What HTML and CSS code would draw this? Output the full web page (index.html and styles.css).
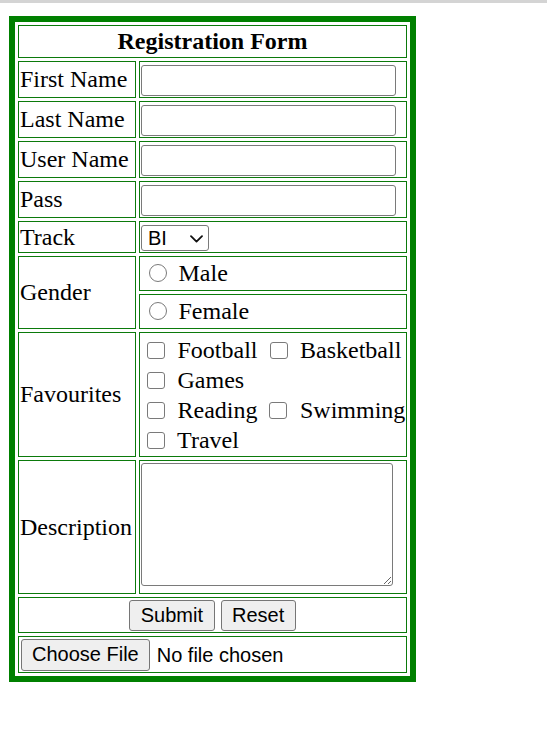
FILE: index.html
```html
<!DOCTYPE html>
<html lang="en">
<head>
<meta charset="utf-8">
<title>Registration Form</title>
<link rel="stylesheet" href="styles.css">
</head>
<body>
<div class="topbar"></div>
<form class="reg-form">
<table class="form-table">
  <colgroup><col class="col-label"><col class="col-field"></colgroup>
  <tr class="row-head"><th colspan="2" class="head">Registration Form</th></tr>
  <tr class="row-input"><td class="label">First Name</td><td class="field field-top"><input type="text" class="text-input"></td></tr>
  <tr class="row-input"><td class="label">Last Name</td><td class="field field-top"><input type="text" class="text-input"></td></tr>
  <tr class="row-input"><td class="label">User Name</td><td class="field field-top"><input type="text" class="text-input"></td></tr>
  <tr class="row-input"><td class="label">Pass</td><td class="field field-top"><input type="password" class="text-input"></td></tr>
  <tr class="row-track"><td class="label">Track</td><td class="field field-top"><span class="select-wrap"><select class="track-select"><option>BI</option><option>OS</option><option>SD</option></select><svg class="chevron" width="13" height="8" viewBox="0 0 13 8" aria-hidden="true"><path d="M1 1.2 L6.5 6.6 L12 1.2" fill="none" stroke="#111" stroke-width="1.8" stroke-linecap="round" stroke-linejoin="round"/></svg></span></td></tr>
  <tr class="row-radio"><td class="label" rowspan="2">Gender</td><td class="field"><input type="radio" name="gender" class="radio"> Male</td></tr>
  <tr class="row-radio"><td class="field"><input type="radio" name="gender" class="radio"> Female</td></tr>
  <tr class="row-fav"><td class="label">Favourites</td><td class="field fav-cell"><input type="checkbox" class="check"> Football <input type="checkbox" class="check"> Basketball<br><input type="checkbox" class="check"> Games<br><input type="checkbox" class="check"> Reading <input type="checkbox" class="check"> Swimming<br><input type="checkbox" class="check"> Travel</td></tr>
  <tr class="row-desc"><td class="label">Description</td><td class="field field-top"><textarea class="desc"></textarea></td></tr>
  <tr class="row-actions"><td colspan="2" class="actions"><input type="submit" value="Submit" class="btn"> <input type="reset" value="Reset" class="btn"></td></tr>
  <tr class="row-file"><td colspan="2" class="file-cell"><input type="file" class="file"></td></tr>
</table>
</form>
</body>
</html>
```
FILE: styles.css
```css
html, body {
  margin: 0;
  padding: 0;
  background: #ffffff;
}
body {
  font-family: "Liberation Serif", "Times New Roman", serif;
  font-size: 24px;
  color: #000;
}
.topbar {
  height: 3px;
  background: #d4d4d4;
}
.reg-form {
  margin: 13px 0 0 9px;
}
.form-table {
  box-sizing: border-box;
  width: 407px;
  table-layout: fixed;
  border: 6px solid #008000;
  border-collapse: separate;
  border-spacing: 3px;
}
.col-label { width: 118px; }
.col-field { width: 268px; }

.form-table th,
.form-table td {
  border: 1px solid #0b7a0b;
  padding: 1px;
  vertical-align: middle;
  white-space: nowrap;
}
.head {
  font-weight: bold;
  text-align: center;
}
.label {
  padding: 1px 2px;
  text-align: left;
}
.field-top {
  vertical-align: top !important;
}

.row-head { height: 33px; }
.row-input { height: 37px; }
.row-track { height: 32px; }
.row-radio { height: 35px; }
.row-fav { height: 125px; }
.row-desc { height: 134px; }
.row-actions { height: 36px; }
.row-file { height: 37px; }

.text-input {
  display: block;
  box-sizing: border-box;
  width: 255px;
  height: 31px;
  margin: 2px 0 0 0;
  padding: 1px 3px;
  border: 1px solid #7a7a7a;
  border-radius: 3px;
  background: #fff;
  font: 20px "Liberation Sans", Arial, sans-serif;
}
.select-wrap {
  position: relative;
  display: block;
  width: 68px;
  margin: 2px 0 0 0;
}
.track-select {
  display: block;
  box-sizing: border-box;
  width: 68px;
  height: 26px;
  margin: 0;
  padding: 0 0 0 6px;
  border: 1px solid #7a7a7a;
  border-radius: 3px;
  background: #fff;
  color: #000;
  font: 20px "Liberation Sans", Arial, sans-serif;
  -webkit-appearance: none;
  appearance: none;
}
.chevron {
  position: absolute;
  right: 6px;
  top: 10px;
  pointer-events: none;
}
.radio {
  -webkit-appearance: none;
  appearance: none;
  box-sizing: border-box;
  width: 18px;
  height: 18px;
  margin: 0 6px 0 7.5px;
  border: 1px solid #7a7a7a;
  border-radius: 50%;
  background: #fff;
  vertical-align: -1px;
}
.fav-cell {
  line-height: 30px;
}
.check {
  -webkit-appearance: none;
  appearance: none;
  box-sizing: border-box;
  width: 18px;
  height: 17px;
  margin: 0 6.5px 0 6px;
  border: 1px solid #7a7a7a;
  border-radius: 3px;
  background: #fff;
  vertical-align: -1px;
}
.desc {
  display: block;
  box-sizing: border-box;
  width: 252px;
  height: 123px;
  margin: 1px 0 0 0;
  border: 1px solid #7a7a7a;
  border-radius: 3px;
  font: 20px "Liberation Sans", Arial, sans-serif;
}
.actions {
  text-align: center;
}
.btn {
  box-sizing: border-box;
  height: 31px;
  margin: 0;
  padding: 0 10.5px;
  border: 1px solid #767676;
  border-radius: 3px;
  background: #efefef;
  color: #000;
  font: 20px "Liberation Sans", Arial, sans-serif;
}
.file-cell {
  text-align: left;
}
.file {
  font: 20px "Liberation Sans", Arial, sans-serif;
  color: #000;
}
.file::file-selector-button {
  box-sizing: border-box;
  height: 32px;
  margin: 0 7px 0 1px;
  padding: 0 10px;
  border: 1px solid #767676;
  border-radius: 3px;
  background: #efefef;
  color: #000;
  font: inherit;
}
```
